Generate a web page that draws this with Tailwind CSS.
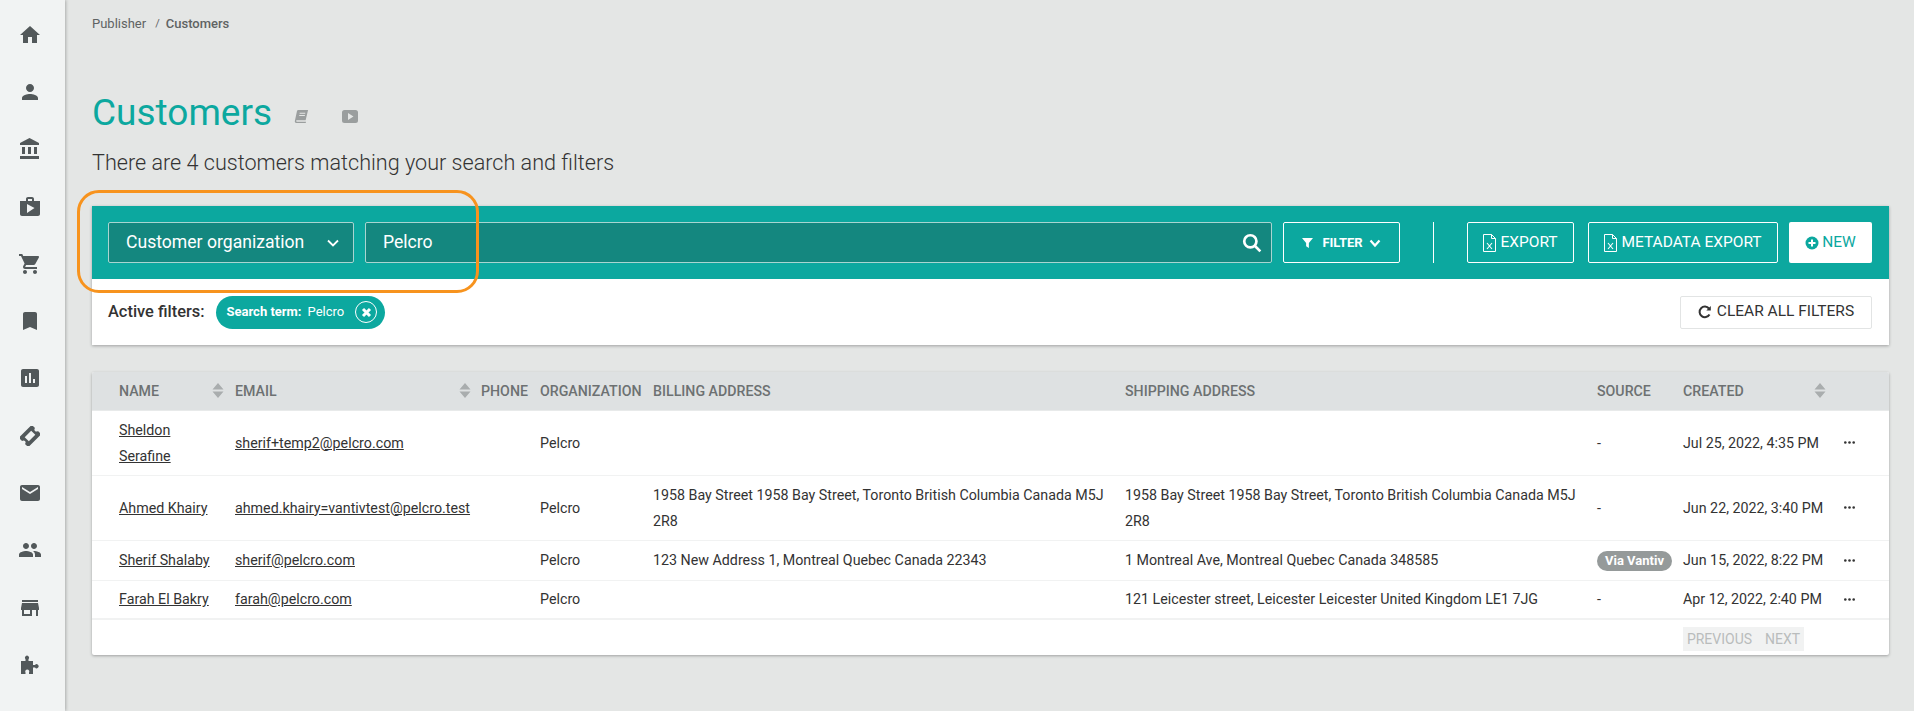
<!DOCTYPE html>
<html lang="en">
<head>
  <meta charset="UTF-8" />
  <title>Customers</title>
  <script src="https://cdn.jsdelivr.net/npm/@tailwindcss/browser@4"></script>
</head>
<body class="bg-[#e4e6e5] text-[#333] font-['Roboto',sans-serif]">
<div class="flex h-[711px] overflow-hidden relative">

  <!-- Sidebar -->
  <aside class="w-[65px] shrink-0 h-full bg-[#f1f3f3] shadow-[1px_0_3px_rgba(0,0,0,0.25)] pt-[6px] flex flex-col items-center pr-[5px] text-[#52585a]">
    <div class="h-[57.3px] flex items-center justify-center"><svg class="w-6 h-6" viewBox="0 0 24 24" fill="currentColor"><path d="M10 20v-6h4v6h5v-8h3L12 3 2 12h3v8z"/></svg></div>
    <div class="h-[57.3px] flex items-center justify-center"><svg class="w-6 h-6" viewBox="0 0 24 24" fill="currentColor"><path d="M12 12c2.21 0 4-1.79 4-4s-1.79-4-4-4-4 1.79-4 4 1.79 4 4 4zm0 2c-2.67 0-8 1.34-8 4v2h16v-2c0-2.66-5.33-4-8-4z"/></svg></div>
    <div class="h-[57.3px] flex items-center justify-center"><svg class="w-6 h-6" viewBox="0 0 24 24" fill="currentColor"><path d="M4 10v7h3v-7H4zm6 0v7h3v-7h-3zM2 22h19v-3H2v3zm14-12v7h3v-7h-3zm-4.500-9L2 6v2h19V6l-9.500-5z"/></svg></div>
    <div class="h-[57.3px] flex items-center justify-center"><svg class="w-6 h-6" viewBox="0 0 24 24" fill="currentColor"><path d="M16 6V4c0-1.110-.890-2-2-2h-4c-1.110 0-2 .890-2 2v2H2v13c0 1.110.890 2 2 2h16c1.110 0 2-.890 2-2V6h-6zm-6-2h4v2h-4V4zM9 18V9l7.500 4L9 18z"/></svg></div>
    <div class="h-[57.3px] flex items-center justify-center"><svg class="w-6 h-6" viewBox="0 0 24 24" fill="currentColor"><path d="M7 18c-1.100 0-1.990.900-1.990 2S5.900 22 7 22s2-.900 2-2-.900-2-2-2zM1 2v2h2l3.600 7.590-1.350 2.450c-.160.280-.250.610-.250.960 0 1.100.900 2 2 2h12v-2H7.420c-.140 0-.250-.110-.250-.250l.030-.120.900-1.630h7.450c.750 0 1.410-.410 1.750-1.030l3.580-6.490c.080-.140.120-.310.120-.480 0-.550-.450-1-1-1H5.210l-.940-2H1zm16 16c-1.100 0-1.990.900-1.990 2s.890 2 1.990 2 2-.900 2-2-.900-2-2-2z"/></svg></div>
    <div class="h-[57.3px] flex items-center justify-center"><svg class="w-6 h-6" viewBox="0 0 24 24" fill="currentColor"><path d="M17 3H7c-1.100 0-1.990.900-1.990 2L5 21l7-3 7 3V5c0-1.100-.900-2-2-2z"/></svg></div>
    <div class="h-[57.3px] flex items-center justify-center"><svg class="w-6 h-6" viewBox="0 0 24 24" fill="currentColor"><path d="M19 3H5c-1.100 0-2 .900-2 2v14c0 1.100.900 2 2 2h14c1.100 0 2-.900 2-2V5c0-1.100-.900-2-2-2zM9 17H7v-7h2v7zm4 0h-2V7h2v10zm4 0h-2v-4h2v4z"/></svg></div>
    <div class="h-[57.3px] flex items-center justify-center"><svg class="w-[20px] h-[20px]" viewBox="0 0 24 24" fill="currentColor"><path fill-rule="evenodd" transform="rotate(-45 12 12)" d="M23 9.500V6c0-1.100-.900-2-2-2H3c-1.100 0-2 .900-2 2v3.500c1.400 0 2.500 1.100 2.500 2.500S2.400 14.500 1 14.500V18c0 1.100.900 2 2 2h18c1.100 0 2-.900 2-2v-3.500c-1.400 0-2.500-1.100-2.500-2.500s1.100-2.500 2.500-2.500zM6.500 8.500h11v7h-11z"/></svg></div>
    <div class="h-[57.3px] flex items-center justify-center"><svg class="w-6 h-6" viewBox="0 0 24 24" fill="currentColor"><path d="M20 4H4c-1.100 0-1.990.900-1.990 2L2 18c0 1.100.900 2 2 2h16c1.100 0 2-.900 2-2V6c0-1.100-.900-2-2-2zm0 4l-8 5-8-5V6l8 5 8-5v2z"/></svg></div>
    <div class="h-[57.3px] flex items-center justify-center"><svg class="w-6 h-6" viewBox="0 0 24 24" fill="currentColor"><path d="M16 11c1.660 0 2.990-1.340 2.990-3S17.660 5 16 5c-1.660 0-3 1.340-3 3s1.340 3 3 3zm-8 0c1.660 0 2.990-1.340 2.990-3S9.660 5 8 5C6.340 5 5 6.340 5 8s1.340 3 3 3zm0 2c-2.330 0-7 1.170-7 3.500V19h14v-2.500c0-2.330-4.670-3.500-7-3.500zm8 0c-.290 0-.620.020-.970.050 1.160.840 1.970 1.970 1.970 3.450V19h6v-2.500c0-2.330-4.670-3.500-7-3.500z"/></svg></div>
    <div class="h-[57.3px] flex items-center justify-center"><svg class="w-6 h-6" viewBox="0 0 24 24" fill="currentColor"><path d="M20 4H4v2h16V4zm1 10v-2l-1-5H4l-1 5v2h1v6h10v-6h4v6h2v-6h1zm-9 4H6v-4h6v4z"/></svg></div>
    <div class="h-[57.3px] flex items-center justify-center"><svg class="w-[20px] h-[20px]" viewBox="0 0 20 20" fill="currentColor"><path d="M1 6h4.500V4a2 2 0 1 1 3 0v2H13v4h2a2 2 0 1 1 0 2.500h-2V19H9v-1.500a2 2 0 1 0-3.500 0V19H1z"/></svg></div>
  </aside>

  <main class="flex-1 min-w-0 pl-[27px] pr-[25px]">
    <!-- Breadcrumb -->
    <div class="pt-[14px] h-[33px] flex items-center text-[13px] leading-5 text-[#5f6363]">
      <span>Publisher</span><span class="ml-[9px] mr-[6px] text-[11px]">/</span><span class="font-medium">Customers</span>
    </div>

    <!-- Title -->
    <div class="mt-[58px] h-[44px] flex items-center">
      <h1 class="text-[37px] leading-[44px] text-[#0ca89f]">Customers</h1>
      <svg class="w-[15px] h-[15px] ml-[22px] mt-[6px] text-[#9a9e9e]" viewBox="0 0 16 16" fill="currentColor"><path d="M4.500 1H15l-2.600 11H3.200c-.700 0-.900.500-.900.800 0 .500.300.800.900.800h9.600l-.300 1.400H2.600C1.400 15 .6 14.200 .9 12.900L3.200 2.200C3.400 1.400 3.800 1 4.500 1zM6 4v1h6V4H6zM5.600 6.500v1h6v-1h-6z"/></svg>
      <svg class="w-4 h-[13px] ml-[33px] mt-[6px] text-[#9a9e9e]" viewBox="0 0 16 13" fill="currentColor"><path fill-rule="evenodd" d="M2.500 0h11A2.500 2.500 0 0 1 16 2.500v8a2.500 2.500 0 0 1-2.500 2.500h-11A2.500 2.500 0 0 1 0 10.500v-8A2.500 2.500 0 0 1 2.500 0zM6 3v7l5.500-3.500z"/></svg>
    </div>
    <p class="mt-[14px] h-[28px] text-[21.6px] leading-[28px] font-light text-[#333] whitespace-nowrap">There are 4 customers matching your search and filters</p>

    <!-- Filter card -->
    <section class="mt-[29px] bg-white shadow-[0_1px_3px_rgba(0,0,0,0.3)]">
      <div class="h-[73px] bg-[#0ca89f] pl-4 pr-[17px] flex items-center text-white">
        <div class="w-[246px] h-[41px] bg-[#14877f] border border-[#a9d5d1] rounded-[2px] flex items-center justify-between pl-[17px] pr-[13px] text-[17.6px]">
          <span>Customer organization</span>
          <svg class="w-[14px] h-[14px]" viewBox="0 0 14 14" fill="none" stroke="currentColor" stroke-width="1.800"><path d="M2 4.500l5 5 5-5"/></svg>
        </div>
        <div class="ml-[11px] w-[907px] h-[41px] bg-[#14877f] border border-[#a9d5d1] rounded-[2px] flex items-center justify-between pl-[17px] pr-[9px] text-[17.6px]">
          <span>Pelcro</span>
          <svg class="w-5 h-5" viewBox="0 0 18 18" fill="none" stroke="currentColor" stroke-width="2.400"><circle cx="7.500" cy="7.500" r="5.500"/><path d="M11.500 11.500l5 5"/></svg>
        </div>
        <div class="ml-[11px] w-[117px] h-[41px] border border-white rounded-[2px] flex items-center justify-center text-[13px] font-bold">
          <svg class="w-[11px] h-[11px] mr-[9px]" viewBox="0 0 12 12" fill="currentColor"><path d="M0 1h12L7.500 6.500V12l-3-2V6.500z"/></svg>
          <span>FILTER</span>
          <svg class="w-3 h-3 ml-[6px]" viewBox="0 0 12 12" fill="none" stroke="currentColor" stroke-width="2.200"><path d="M1.500 3.500L6 8.500l4.500-5"/></svg>
        </div>
        <div class="ml-[33px] w-px h-[41px] bg-white"></div>
        <div class="ml-[33px] w-[107px] h-[41px] border border-white rounded-[2px] flex items-center justify-center text-[15.500px]">
          <svg class="w-[13px] h-[18px] mr-[4px]" viewBox="0 0 13 18" fill="none" stroke="currentColor"><path d="M.5.500h8l4 4v13H.5zM8.500.500v4h4"/><path d="M4 9l5 6M9 9l-5 6" stroke-width="1.100"/></svg>
          <span>EXPORT</span>
        </div>
        <div class="ml-[14px] w-[190px] h-[41px] border border-white rounded-[2px] flex items-center justify-center text-[15.500px]">
          <svg class="w-[13px] h-[18px] mr-[4px]" viewBox="0 0 13 18" fill="none" stroke="currentColor"><path d="M.5.500h8l4 4v13H.5zM8.500.500v4h4"/><path d="M4 9l5 6M9 9l-5 6" stroke-width="1.100"/></svg>
          <span>METADATA EXPORT</span>
        </div>
        <div class="ml-[11px] w-[83px] h-[41px] bg-white rounded-[2px] flex items-center justify-center text-[15.500px] text-[#0ca89f]">
          <svg class="w-[14px] h-[14px] mr-[3px]" viewBox="0 0 14 14"><circle cx="7" cy="7" r="6.500" fill="currentColor"/><path d="M7 3.500v7M3.500 7h7" stroke="white" stroke-width="2"/></svg>
          <span>NEW</span>
        </div>
      </div>
      <div class="h-[66px] pl-4 pr-[17px] flex items-center justify-between">
        <div class="flex items-center">
          <span class="text-[16.400px] font-medium text-[#333]">Active filters:</span>
          <div class="ml-[11px] w-[169px] h-[33px] rounded-full bg-[#0ca89f] text-white flex items-center pl-[11px] text-[13px]">
            <span class="font-bold">Search term:</span><span class="ml-[6px]">Pelcro</span>
            <span class="ml-[11px] w-[22px] h-[22px] rounded-full border border-white flex items-center justify-center">
              <svg class="w-[11px] h-[11px]" viewBox="0 0 11 11" fill="none" stroke="currentColor" stroke-width="3"><path d="M2 2l7 7M9 2l-7 7"/></svg>
            </span>
          </div>
        </div>
        <div class="w-[192px] h-[33px] border border-[#e2e4e4] rounded-[2px] flex items-center justify-center text-[15.500px] text-[#333]">
          <svg class="w-[14px] h-[14px] mr-[5px]" viewBox="0 0 14 14" fill="none" stroke="currentColor" stroke-width="2"><path d="M11.500 9.500A5.300 5.300 0 1 1 11 3.500"/><path d="M12.800 1v4.500H8.300" stroke="none" fill="currentColor"/></svg>
          <span>CLEAR ALL FILTERS</span>
        </div>
      </div>
    </section>

    <!-- Table card -->
    <section class="mt-[27px] h-[283px] bg-white rounded-[2px] shadow-[0_1px_3px_rgba(0,0,0,0.3)] overflow-hidden">
      <table class="w-full table-fixed text-[14.250px] leading-[26px] text-[#333]">
        <colgroup>
          <col class="w-[143px]" /><col class="w-[246px]" /><col class="w-[59px]" /><col class="w-[113px]" />
          <col class="w-[472px]" /><col class="w-[472px]" /><col class="w-[86px]" /><col class="w-[161px]" /><col />
        </colgroup>
        <thead>
          <tr class="h-[38px] bg-[#dee1e2] text-[14.200px] font-medium text-[#6d7172] text-left border-b border-[#e8eaea]">
            <th class="pl-[27px] font-medium">
              <div class="flex items-center justify-between pr-[11px]">NAME
                <svg class="w-3 h-[15px] text-[#a9adae]" viewBox="0 0 12 15" fill="currentColor"><path d="M6 0l5.500 6.500H.500zM6 15L.500 8.500h11z"/></svg>
              </div>
            </th>
            <th class="font-medium">
              <div class="flex items-center justify-between pr-[10px]">EMAIL
                <svg class="w-3 h-[15px] text-[#a9adae]" viewBox="0 0 12 15" fill="currentColor"><path d="M6 0l5.500 6.500H.500zM6 15L.500 8.500h11z"/></svg>
              </div>
            </th>
            <th class="font-medium">PHONE</th>
            <th class="font-medium">ORGANIZATION</th>
            <th class="font-medium">BILLING ADDRESS</th>
            <th class="font-medium">SHIPPING ADDRESS</th>
            <th class="font-medium">SOURCE</th>
            <th class="font-medium">
              <div class="flex items-center justify-between pr-[18px]">CREATED
                <svg class="w-3 h-[15px] text-[#a9adae]" viewBox="0 0 12 15" fill="currentColor"><path d="M6 0l5.500 6.500H.500zM6 15L.500 8.500h11z"/></svg>
              </div>
            </th>
            <th></th>
          </tr>
        </thead>
        <tbody>
          <tr class="h-[65px] border-b border-[#f1f2f2]">
            <td class="pl-[27px] pr-2"><a class="underline">Sheldon<br />Serafine</a></td>
            <td><a class="underline">sherif+temp2@pelcro.com</a></td>
            <td></td><td>Pelcro</td><td></td><td></td><td>-</td>
            <td>Jul 25, 2022, 4:35 PM</td>
            <td><svg class="w-[11px] h-[3px]" viewBox="0 0 11 3" fill="#333"><circle cx="1.300" cy="1.500" r="1.300"/><circle cx="5.500" cy="1.500" r="1.300"/><circle cx="9.700" cy="1.500" r="1.300"/></svg></td>
          </tr>
          <tr class="h-[65px] border-b border-[#f1f2f2]">
            <td class="pl-[27px]"><a class="underline">Ahmed Khairy</a></td>
            <td><a class="underline">ahmed.khairy=vantivtest@pelcro.test</a></td>
            <td></td><td>Pelcro</td>
            <td class="pr-4">1958 Bay Street 1958 Bay Street, Toronto British Columbia Canada M5J 2R8</td>
            <td class="pr-4">1958 Bay Street 1958 Bay Street, Toronto British Columbia Canada M5J 2R8</td>
            <td>-</td>
            <td>Jun 22, 2022, 3:40 PM</td>
            <td><svg class="w-[11px] h-[3px]" viewBox="0 0 11 3" fill="#333"><circle cx="1.300" cy="1.500" r="1.300"/><circle cx="5.500" cy="1.500" r="1.300"/><circle cx="9.700" cy="1.500" r="1.300"/></svg></td>
          </tr>
          <tr class="h-[40px] border-b border-[#f1f2f2]">
            <td class="pl-[27px]"><a class="underline">Sherif Shalaby</a></td>
            <td><a class="underline">sherif@pelcro.com</a></td>
            <td></td><td>Pelcro</td>
            <td>123 New Address 1, Montreal Quebec Canada 22343</td>
            <td>1 Montreal Ave, Montreal Quebec Canada 348585</td>
            <td><span class="inline-flex items-center justify-center w-[75px] h-5 rounded-full bg-[#959a9a] text-white text-[13px] font-bold">Via Vantiv</span></td>
            <td>Jun 15, 2022, 8:22 PM</td>
            <td><svg class="w-[11px] h-[3px]" viewBox="0 0 11 3" fill="#333"><circle cx="1.300" cy="1.500" r="1.300"/><circle cx="5.500" cy="1.500" r="1.300"/><circle cx="9.700" cy="1.500" r="1.300"/></svg></td>
          </tr>
          <tr class="h-[39px] border-b-2 border-[#f1f2f2]">
            <td class="pl-[27px]"><a class="underline">Farah El Bakry</a></td>
            <td><a class="underline">farah@pelcro.com</a></td>
            <td></td><td>Pelcro</td><td></td>
            <td>121 Leicester street, Leicester Leicester United Kingdom LE1 7JG</td>
            <td>-</td>
            <td>Apr 12, 2022, 2:40 PM</td>
            <td><svg class="w-[11px] h-[3px]" viewBox="0 0 11 3" fill="#333"><circle cx="1.300" cy="1.500" r="1.300"/><circle cx="5.500" cy="1.500" r="1.300"/><circle cx="9.700" cy="1.500" r="1.300"/></svg></td>
          </tr>
        </tbody>
      </table>
      <div class="pl-[1591px] pt-[7px]">
        <div class="w-[121px] h-6 bg-[#f1f2f2] flex items-center justify-center gap-[13px] text-[14px] text-[#b9bcbc]">
          <span>PREVIOUS</span><span>NEXT</span>
        </div>
      </div>
    </section>
  </main>

  <!-- Orange annotation -->
  <div class="absolute left-[77px] top-[190px] w-[402px] h-[103px] border-[3px] border-[#f7931e] rounded-[22px] pointer-events-none"></div>
</div>
</body>
</html>
